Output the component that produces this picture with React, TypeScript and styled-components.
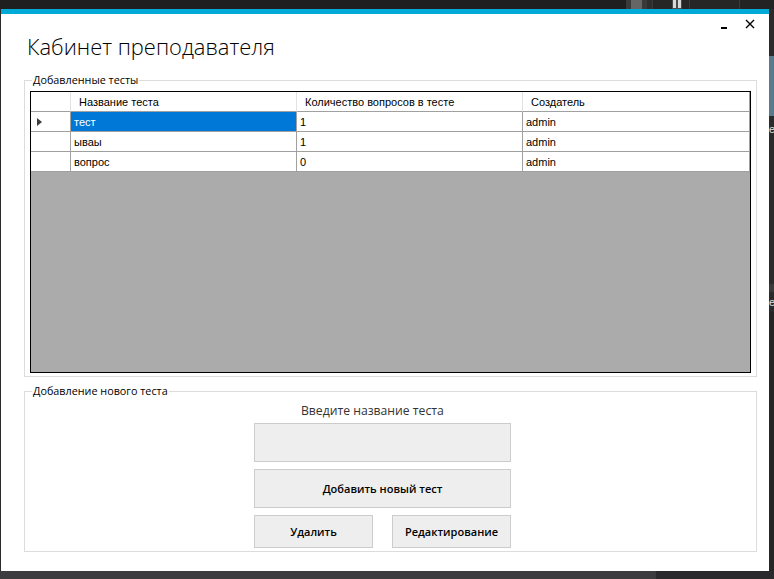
import React from "react";
import styled, { createGlobalStyle } from "styled-components";

const Global = createGlobalStyle`
  html, body { margin: 0; padding: 0; background: #252526; }
  body { width: 774px; height: 579px; overflow: hidden; font-family: "Open Sans", "Noto Sans", sans-serif; }
  * { box-sizing: border-box; }
`;

const Screen = styled.div`
  width: 774px;
  height: 579px;
  display: flex;
  flex-direction: column;
  background: #252526;
`;

const TopStrip = styled.div`
  height: 9px;
  display: flex;
  background: #1f1f1f;
`;

const StripPart = styled.div<{ $w: number; $bg: string; $edge?: boolean }>`
  width: ${(p) => p.$w}px;
  flex: none;
  background: ${(p) => p.$bg};
  border-right: ${(p) => (p.$edge ? "1px solid #3a3a3a" : "none")};
  display: flex;
  justify-content: center;
  gap: 2px;
`;

const PauseBar = styled.div`
  width: 3px;
  height: 8px;
  background: #d8d8d8;
`;

const Middle = styled.div`
  height: 562px;
  display: flex;
`;

const LeftEdge = styled.div`
  width: 1px;
  background: #2b2b2b;
`;

const RightStrip = styled.div`
  width: 5px;
  display: flex;
  flex-direction: column;
  overflow: hidden;
  background: #252526;
`;

const SideBlock = styled.div<{ $h: number; $bg: string }>`
  height: ${(p) => p.$h}px;
  flex: none;
  background: ${(p) => p.$bg};
  color: #e0e0e0;
  font-family: "Liberation Sans", Arial, sans-serif;
  font-size: 11px;
  line-height: ${(p) => p.$h}px;
  white-space: nowrap;
`;

const Window = styled.div`
  width: 768px;
  height: 562px;
  background: #ffffff;
  border-top: 5px solid #00aad6;
  display: flex;
  flex-direction: column;
  padding: 0 12px 0 23px;
`;

const Controls = styled.div`
  height: 16px;
  display: flex;
  justify-content: flex-end;
  align-items: flex-end;
  gap: 18px;
  padding: 0 2px 1px 0;
`;

const Title = styled.h1`
  margin: 2px 0 0 3px;
  font-family: "Open Sans", "Noto Sans", sans-serif;
  font-weight: 300;
  font-size: 21.9px;
  line-height: 30px;
  color: #000;
`;

const GroupBox = styled.fieldset<{ $mt: number; $pt: number }>`
  margin: ${(p) => p.$mt}px 0 0 0;
  border: 1px solid #dcdcdc;
  padding: ${(p) => p.$pt}px 5px 3px 5px;
  min-width: 0;
`;

const Legend = styled.legend`
  margin-left: 2px;
  padding: 0 1px;
  font-family: "Open Sans", "Noto Sans", sans-serif;
  font-size: 10.8px;
  line-height: 14px;
  color: #000;
`;

const Grid = styled.div`
  height: 282px;
  border: 1px solid #000;
  background: #ababab;
  display: flex;
  flex-direction: column;
  font-family: "Liberation Sans", Arial, sans-serif;
  font-size: 11px;
  color: #000;
`;

const GridRow = styled.div`
  display: grid;
  grid-template-columns: 40px 226px 226px 227px;
  height: 20px;
  flex: none;
`;

const HeadCell = styled.div<{ $last?: boolean }>`
  background: #fff;
  border-right: 1px solid ${(p) => (p.$last ? "#a0a0a0" : "#e3e3e3")};
  border-bottom: 1px solid #a0a0a0;
  padding-left: 8px;
  display: flex;
  align-items: center;
  white-space: nowrap;
`;

const RowHead = styled.div`
  background: #fff;
  border-right: 1px solid #a0a0a0;
  border-bottom: 1px solid #a0a0a0;
  display: flex;
  align-items: center;
  padding-left: 6px;
`;

const Cell = styled.div<{ $sel?: boolean }>`
  background: ${(p) => (p.$sel ? "#0078d7" : "#fff")};
  color: ${(p) => (p.$sel ? "#fff" : "#000")};
  border-right: 1px solid #a0a0a0;
  border-bottom: 1px solid #a0a0a0;
  padding: 1px 0 0 3px;
  display: flex;
  align-items: center;
  white-space: nowrap;
`;

const Form = styled.div`
  margin-left: 224px;
  width: 257px;
  display: flex;
  flex-direction: column;
`;

const Prompt = styled.div`
  padding-left: 47px;
  height: 18px;
  margin-bottom: 3px;
  font-family: "Open Sans", "Noto Sans", sans-serif;
  font-size: 12.2px;
  line-height: 18px;
  color: #333;
  white-space: nowrap;
`;

const TextBox = styled.div`
  height: 39px;
  background: #eeeeee;
  border: 1px solid #cccccc;
`;

const Button = styled.button<{ $h: number; $w?: number }>`
  height: ${(p) => p.$h}px;
  width: ${(p) => (p.$w ? `${p.$w}px` : "100%")};
  margin: 0;
  padding: 0;
  background: #eeeeee;
  border: 1px solid #cccccc;
  font-family: "Open Sans", "Noto Sans", sans-serif;
  font-weight: 600;
  font-size: 11px;
  color: #000;
  display: flex;
  align-items: center;
  justify-content: center;
`;

const ButtonRow = styled.div`
  display: flex;
  justify-content: space-between;
  margin-top: 7px;
`;

const Spacer = styled.div`
  height: 7px;
`;

const BottomStrip = styled.div`
  height: 8px;
  display: flex;
`;

const rows = [
  { name: "тест", count: "1", by: "admin", sel: true },
  { name: "ываы", count: "1", by: "admin" },
  { name: "вопрос", count: "0", by: "admin" },
];

export default function App() {
  return (
    <>
      <Global />
      <Screen>
        <TopStrip>
          <StripPart $w={627} $bg="#1f1f1f" $edge />
          <StripPart $w={4} $bg="#3a3a3a" />
          <StripPart $w={11} $bg="#666666" />
          <StripPart $w={5} $bg="#3a3a3a" />
          <StripPart $w={6} $bg="#2e2e2e" $edge />
          <StripPart $w={19} $bg="#262626" />
          <StripPart $w={10} $bg="#4a4a4a">
            <PauseBar />
            <PauseBar />
          </StripPart>
          <StripPart $w={8} $bg="#262626" $edge />
          <StripPart $w={50} $bg="#262626" $edge />
          <StripPart $w={34} $bg="#232323" />
        </TopStrip>
        <Middle>
          <LeftEdge />
          <Window>
            <Controls>
              <svg width="6" height="2" viewBox="0 0 6 2">
                <rect x="0" y="0" width="6" height="2" fill="#000" />
              </svg>
              <svg width="10" height="10" viewBox="0 0 10 10">
                <path d="M1 1 L9 9 M9 1 L1 9" stroke="#000" strokeWidth="1.4" fill="none" />
              </svg>
            </Controls>
            <Title>Кабинет преподавателя</Title>
            <GroupBox $mt={11} $pt={4}>
              <Legend>Добавленные тесты</Legend>
              <Grid>
                <GridRow>
                  <HeadCell />
                  <HeadCell>Название теста</HeadCell>
                  <HeadCell>Количество вопросов в тесте</HeadCell>
                  <HeadCell $last>Создатель</HeadCell>
                </GridRow>
                {rows.map((r, i) => (
                  <GridRow key={i}>
                    <RowHead>
                      {r.sel && (
                        <svg width="5" height="8" viewBox="0 0 5 8">
                          <path d="M0 0 L5 4 L0 8 Z" fill="#3c3c3c" />
                        </svg>
                      )}
                    </RowHead>
                    <Cell $sel={r.sel}>{r.name}</Cell>
                    <Cell>{r.count}</Cell>
                    <Cell>{r.by}</Cell>
                  </GridRow>
                ))}
              </Grid>
            </GroupBox>
            <GroupBox $mt={7} $pt={4}>
              <Legend>Добавление нового теста</Legend>
              <Form>
                <Prompt>Введите название теста</Prompt>
                <TextBox />
                <Spacer />
                <Button $h={39}>Добавить новый тест</Button>
                <ButtonRow>
                  <Button $h={33} $w={119}>Удалить</Button>
                  <Button $h={33} $w={119}>Редактирование</Button>
                </ButtonRow>
              </Form>
            </GroupBox>
          </Window>
          <RightStrip>
            <SideBlock $h={47} $bg="#2b2b2b" />
            <SideBlock $h={60} $bg="#5a7b8e" />
            <SideBlock $h={6} $bg="#2b2b2b" />
            <SideBlock $h={14} $bg="#2b2b2b">е</SideBlock>
            <SideBlock $h={148} $bg="#2b2b2b" />
            <SideBlock $h={8} $bg="#3a3a3a" />
            <SideBlock $h={20} $bg="#2b2b2b">е</SideBlock>
            <SideBlock $h={259} $bg="#252526" />
          </RightStrip>
        </Middle>
        <BottomStrip>
          <StripPart $w={656} $bg="#3c3c3f" $edge />
          <StripPart $w={118} $bg="#2a2a2c" />
        </BottomStrip>
      </Screen>
    </>
  );
}
